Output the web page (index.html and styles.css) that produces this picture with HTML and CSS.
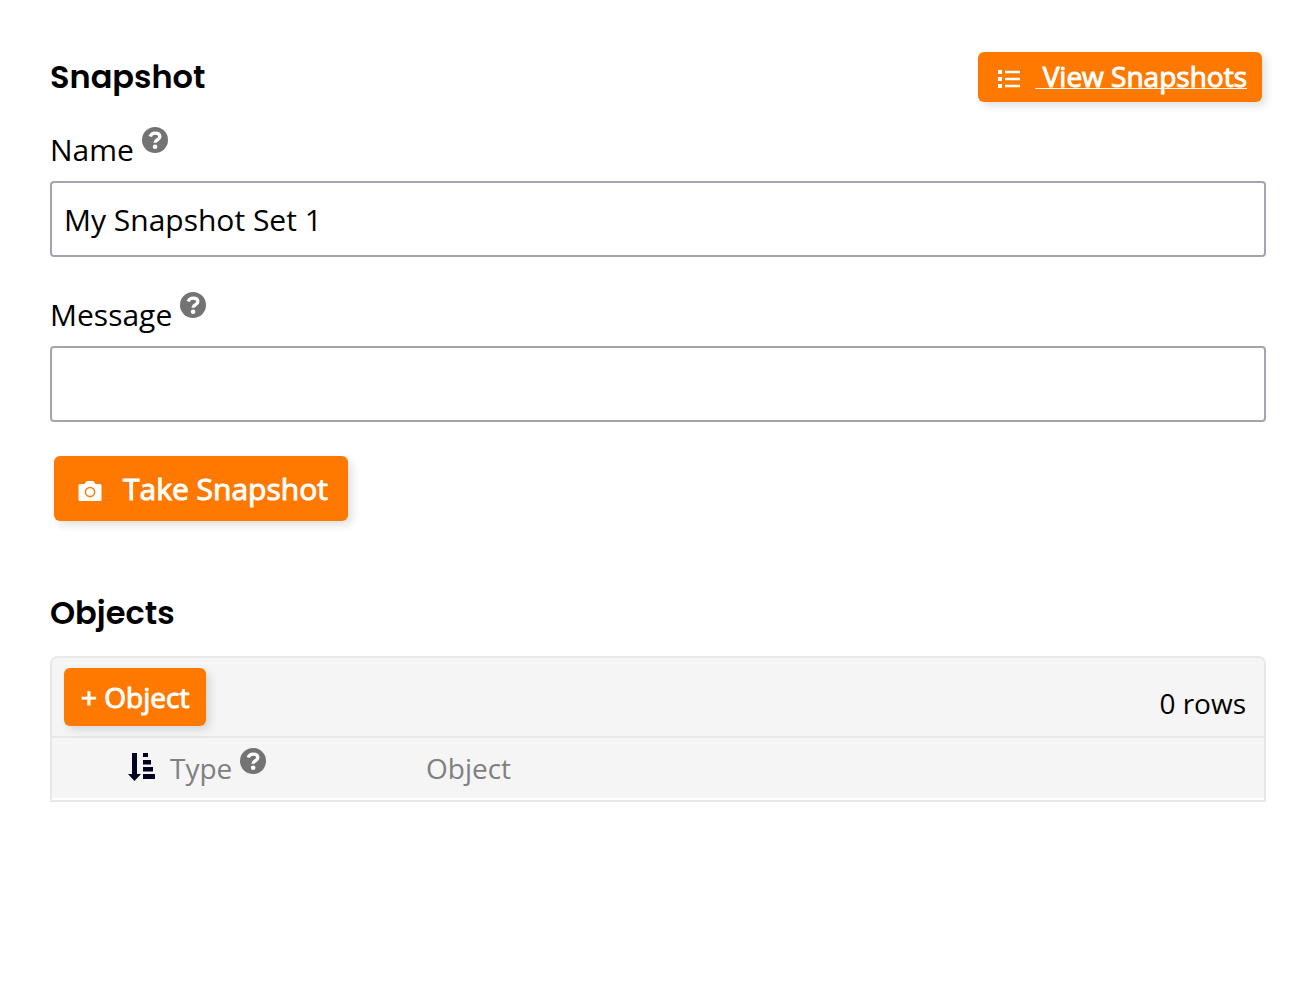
FILE: index.html
```html
<!DOCTYPE html>
<html lang="en">

<head>
  <meta charset="UTF-8">
  <meta name="viewport" content="width=device-width, initial-scale=1.0">
  <title>Snapshot</title>
  <link rel="stylesheet" href="styles.css">
</head>

<body>
  <!-- Shared help icon -->
  <svg class="sprite" aria-hidden="true">
    <symbol id="help" viewBox="0 0 26 26">
      <circle cx="13" cy="13" r="13" fill="#737373"/>
      <path d="M8.200 9.600C9 7.100 10.700 6.100 13.100 6.100c2.800 0 4.700 1.400 4.700 3.600 0 3.200-4.700 2.900-4.700 6" fill="none" stroke="#fff" stroke-width="3.400"/>
      <circle cx="13.100" cy="19.800" r="2.300" fill="#fff"/>
    </symbol>
  </svg>

  <main class="page">
    <header class="page-header">
      <h1>Snapshot</h1>
      <a class="btn btn-view" href="#snapshots">
        <svg width="22" height="18" viewBox="0 0 22 18" aria-hidden="true">
          <path d="M0 0h4v4H0zM0 7h4v4H0zM0 14h4v4H0zM7 .7h15v2.600H7zM7 7.700h15v2.600H7zM7 14.700h15v2.600H7z" fill="#fff"/>
        </svg>
        <span class="btn-text">&nbsp;View Snapshots</span>
      </a>
    </header>

    <form id="snapshotForm">
      <div class="field">
        <div class="field-label">
          <label for="name">Name</label>
          <svg class="help"><use href="#help"/></svg>
        </div>
        <input type="text" id="name" value="My Snapshot Set 1">
      </div>

      <div class="field">
        <div class="field-label">
          <label for="message">Message</label>
          <svg class="help"><use href="#help"/></svg>
        </div>
        <input type="text" id="message">
      </div>

      <button class="btn btn-take" type="submit">
        <svg width="24" height="20" viewBox="0 0 24 20" aria-hidden="true">
          <path fill="#fff" d="M2 3h4.500l1.500-2.200Q8.500 0 9.500 0h5q1 0 1.500.8L17.500 3H22q1.500 0 1.500 1.500v14Q23.500 20 22 20H2Q.5 20 .5 18.500v-14Q.5 3 2 3z"/>
          <circle cx="12" cy="11" r="4.600" fill="none" stroke="#ff7900" stroke-width="1.500"/>
        </svg>
        Take Snapshot
      </button>
    </form>

    <h2>Objects</h2>
    <section class="grid">
      <div class="grid-toolbar">
        <button class="btn btn-add" type="button">+ Object</button>
        <span class="row-count">0 rows</span>
      </div>
      <table>
        <thead>
          <tr>
            <th class="col-type">
              <div class="col-head">
                <svg class="sort" width="28" height="28" viewBox="0 0 28 28" aria-hidden="true">
                  <path d="M4 0h5v21h4l-6.500 7L0 21h4zM15 0h5v4h-5zM15 7h8v4.500h-8zM15 14h10v4.500H15zM15 21h12v5H15z" fill="#000021"/>
                </svg>
                <span>Type</span>
                <svg class="help"><use href="#help"/></svg>
              </div>
            </th>
            <th>Object</th>
          </tr>
        </thead>
      </table>
    </section>
  </main>

  <script>
    document.getElementById("snapshotForm").addEventListener("submit", (event) => {
      event.preventDefault();
    });
  </script>
</body>

</html>
```
FILE: styles.css
```css
* {
  margin: 0;
  padding: 0;
  box-sizing: border-box;
}

body {
  font-family: "Open Sans", sans-serif;
  font-size: 30px;
  line-height: 40px;
  background-color: #fff;
  color: #000;
}

.sprite {
  display: none;
}

.page {
  padding: 52px 50px;
}

h1,
h2 {
  font-family: Poppins, Inter, sans-serif;
  font-size: 32px;
  font-weight: 600;
  line-height: 48px;
}

/* Buttons */
.btn {
  display: flex;
  align-items: center;
  border: none;
  border-radius: 6px;
  background-color: #ff7900;
  color: #fff;
  font-family: inherit;
  font-size: 30px;
  font-weight: 400;
  line-height: 40px;
  -webkit-text-stroke: 1px #fff;
  box-shadow: 4px 4px 8px rgba(0, 0, 0, 0.12);
  cursor: pointer;
}

.btn-view {
  height: 50px;
  margin-right: 4px;
  padding: 0 15px 2px 20px;
  gap: 15px;
  font-size: 28px;
  text-decoration: none;
}

.btn-view svg,
.btn-take svg {
  margin-top: 5px;
}

.btn-text {
  text-decoration: underline;
  text-decoration-thickness: 1px;
}

.btn-take {
  height: 65px;
  margin: 34px 4px 0;
  padding: 0 20px 0 24px;
  gap: 21px;
}

.btn-add {
  height: 58px;
  padding: 0 17px;
  font-size: 28px;
}

/* Form */
.page-header {
  display: flex;
  justify-content: space-between;
  align-items: center;
  margin-bottom: 24px;
}

.field + .field {
  margin-top: 34px;
}

.field-label {
  display: flex;
  gap: 8px;
  height: 55px;
  padding-top: 4px;
}

.help {
  width: 26px;
  height: 26px;
  margin-top: -3px;
}

input {
  display: block;
  width: 100%;
  height: 76px;
  padding: 0 12px;
  border: 2px solid #a5a3b3;
  border-radius: 4px;
  background-color: #fff;
  color: #000;
  font-family: inherit;
  font-size: 30px;
}

/* Objects grid */
h2 {
  margin-top: 68px;
}

.grid {
  margin-top: 19px;
  border: 2px solid #e8e8e8;
  border-radius: 8px 8px 0 0;
  overflow: hidden;
}

.grid-toolbar {
  display: flex;
  justify-content: space-between;
  align-items: flex-start;
  height: 80px;
  padding: 10px 18px 0 12px;
  border-bottom: 2px solid #e8e8e8;
  background-color: #f5f5f5;
}

.row-count {
  padding-top: 15px;
  font-size: 28px;
}

table {
  width: 100%;
  border-collapse: collapse;
  margin-bottom: 2px;
  background-color: #f5f5f5;
}

th {
  height: 60px;
  color: #808080;
  font-size: 28px;
  font-weight: 400;
  text-align: left;
}

.col-type {
  width: 374px;
  padding-left: 76px;
}

.col-head {
  display: flex;
  gap: 8px;
}

.sort {
  margin: 5px 6px 0 0;
}

.col-head .help {
  margin-top: 0;
}
```
